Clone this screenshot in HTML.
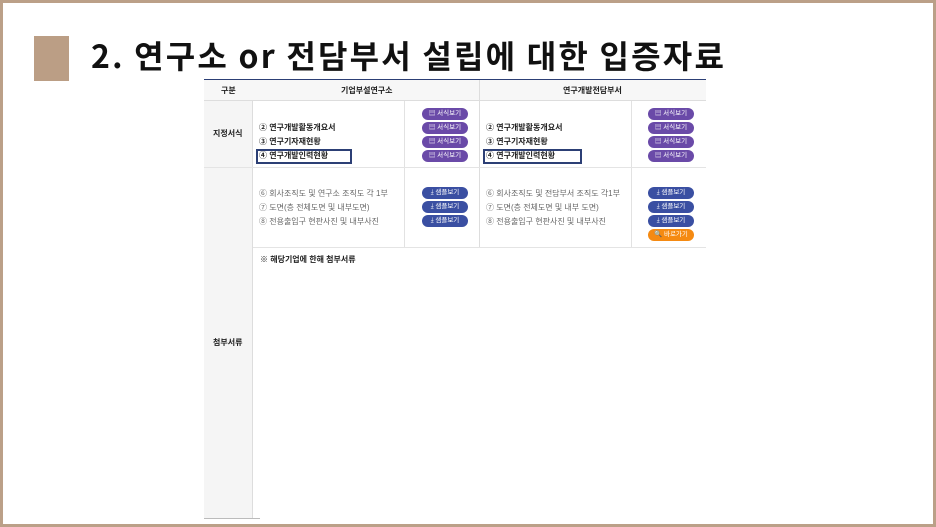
<!DOCTYPE html>
<html><head><meta charset="utf-8"><style>
*{margin:0;padding:0;box-sizing:border-box}
body{width:936px;height:527px;background:#fff;position:relative;overflow:hidden;font-family:"Liberation Sans","Noto Sans CJK KR",sans-serif}
.frame{position:absolute;left:0;top:0;width:936px;height:527px;border:3px solid #bba088}
.sq{position:absolute;left:34px;top:36px;width:35px;height:45px;background:#bb9e85}
.title{position:absolute;left:91px;top:32px;font-size:32px;font-weight:bold;color:#111;font-family:"Noto Sans CJK KR",sans-serif;letter-spacing:2.2px;white-space:nowrap}
.a{position:absolute}
.t{position:absolute;font-size:8px;color:#222;white-space:nowrap;font-weight:bold;line-height:10px}
.g{color:#666;font-weight:normal}
.btn{position:absolute;width:46px;height:12px;border-radius:6px;color:#fff;font-size:6.5px;line-height:12px;text-align:center;white-space:nowrap}
.p{background:#6a4aa8}.b{background:#3a4fa2}.o{background:#f58a12}
.box{position:absolute;border:2px solid #2c3f75;height:15px}
</style></head><body>
<div class="frame"></div>
<div class="sq"></div>
<div class="title">2. 연구소 or 전담부서 설립에 대한 입증자료</div>

<div class="a" style="left:204px;top:79px;width:502px;height:1px;background:#2c3f75"></div>
<div class="a" style="left:204px;top:80px;width:49px;height:438px;background:#f5f5f5;border-right:1px solid #ddd"></div>
<div class="a" style="left:204px;top:80px;width:502px;height:21px;background:#f7f7f7;border-bottom:1px solid #ddd"></div>
<div class="a" style="left:479px;top:80px;width:1px;height:167px;background:#ddd"></div>
<div class="a" style="left:404px;top:101px;width:1px;height:146px;background:#e2e2e2"></div>
<div class="a" style="left:631px;top:101px;width:1px;height:146px;background:#e2e2e2"></div>
<div class="a" style="left:204px;top:167px;width:502px;height:1px;background:#e4e4e4"></div>
<div class="a" style="left:253px;top:247px;width:453px;height:1px;background:#e4e4e4"></div>
<div class="a" style="left:204px;top:518px;width:56px;height:1px;background:#bbb"></div>

<div class="t" style="left:221px;top:86px">구분</div>
<div class="t" style="left:341px;top:86px">기업부설연구소</div>
<div class="t" style="left:563px;top:86px">연구개발전담부서</div>
<div class="t" style="left:213px;top:129px">지정서식</div>
<div class="t" style="left:213px;top:338px">첨부서류</div>

<div class="t" style="left:259px;top:123px">② 연구개발활동개요서</div>
<div class="t" style="left:259px;top:137px">③ 연구기자재현황</div>
<div class="t" style="left:259px;top:151px">④ 연구개발인력현황</div>
<div class="box" style="left:256px;top:149px;width:96px"></div>
<div class="t" style="left:486px;top:123px">② 연구개발활동개요서</div>
<div class="t" style="left:486px;top:137px">③ 연구기자재현황</div>
<div class="t" style="left:486px;top:151px">④ 연구개발인력현황</div>
<div class="box" style="left:483px;top:149px;width:99px"></div>

<div class="t g" style="left:259px;top:189px">⑥ 회사조직도 및 연구소 조직도 각 1부</div>
<div class="t g" style="left:259px;top:203px">⑦ 도면(층 전체도면 및 내부도면)</div>
<div class="t g" style="left:259px;top:217px">⑧ 전용출입구 현판사진 및 내부사진</div>
<div class="t g" style="left:486px;top:189px">⑥ 회사조직도 및 전담부서 조직도 각1부</div>
<div class="t g" style="left:486px;top:203px">⑦ 도면(층 전체도면 및 내부 도면)</div>
<div class="t g" style="left:486px;top:217px">⑧ 전용출입구 현판사진 및 내부사진</div>
<div class="t" style="left:260px;top:255px">※ 해당기업에 한해 첨부서류</div>

<div class="btn p" style="left:422px;top:108px">▤ 서식보기</div>
<div class="btn p" style="left:422px;top:122px">▤ 서식보기</div>
<div class="btn p" style="left:422px;top:136px">▤ 서식보기</div>
<div class="btn p" style="left:422px;top:150px">▤ 서식보기</div>
<div class="btn p" style="left:648px;top:108px">▤ 서식보기</div>
<div class="btn p" style="left:648px;top:122px">▤ 서식보기</div>
<div class="btn p" style="left:648px;top:136px">▤ 서식보기</div>
<div class="btn p" style="left:648px;top:150px">▤ 서식보기</div>
<div class="btn b" style="left:422px;top:187px">⤓ 샘플보기</div>
<div class="btn b" style="left:422px;top:201px">⤓ 샘플보기</div>
<div class="btn b" style="left:422px;top:215px">⤓ 샘플보기</div>
<div class="btn b" style="left:648px;top:187px">⤓ 샘플보기</div>
<div class="btn b" style="left:648px;top:201px">⤓ 샘플보기</div>
<div class="btn b" style="left:648px;top:215px">⤓ 샘플보기</div>
<div class="btn o" style="left:648px;top:229px">🔍 바로가기</div>
</body></html>
